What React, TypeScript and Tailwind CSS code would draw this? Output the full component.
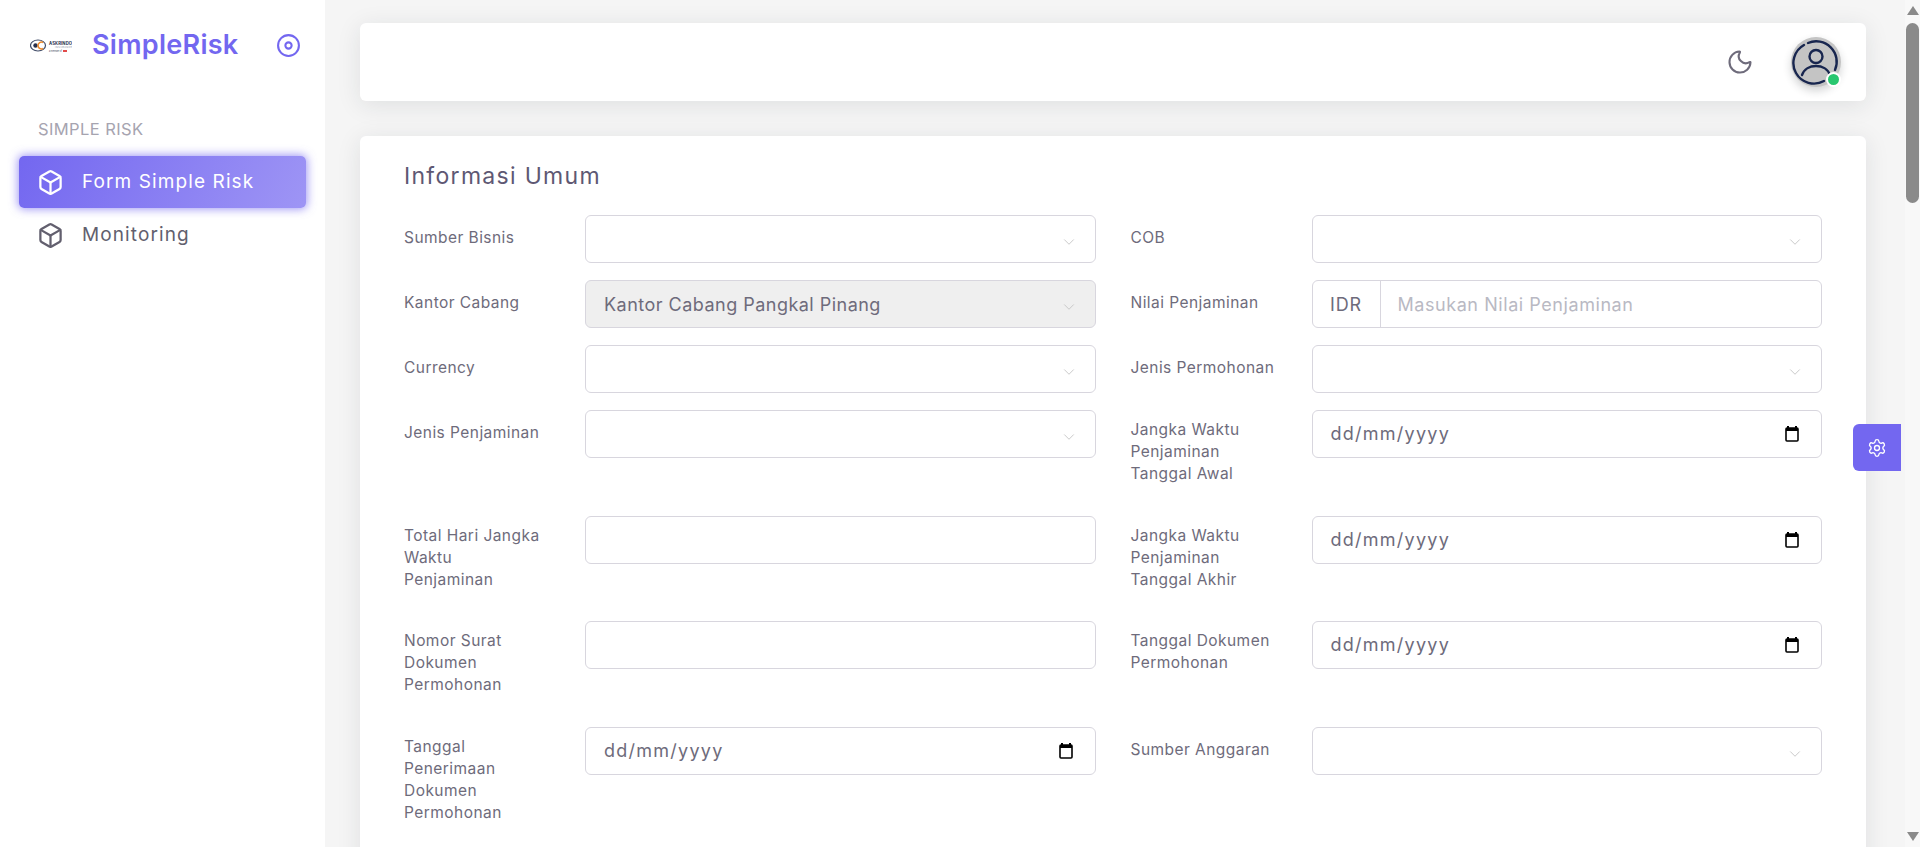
import { Box, ChevronDown, Moon, Settings } from 'lucide-react'

const font = { fontFamily: 'Inter, "Liberation Sans", sans-serif' }

type Kind = 'select' | 'disabled' | 'money' | 'date' | 'text'

const fields: { label: string; kind: Kind }[] = [
  { label: 'Sumber Bisnis', kind: 'select' },
  { label: 'COB', kind: 'select' },
  { label: 'Kantor Cabang', kind: 'disabled' },
  { label: 'Nilai Penjaminan', kind: 'money' },
  { label: 'Currency', kind: 'select' },
  { label: 'Jenis Permohonan', kind: 'select' },
  { label: 'Jenis Penjaminan', kind: 'select' },
  { label: 'Jangka Waktu Penjaminan Tanggal Awal', kind: 'date' },
  { label: 'Total Hari Jangka\nWaktu\nPenjaminan', kind: 'text' },
  { label: 'Jangka Waktu Penjaminan Tanggal Akhir', kind: 'date' },
  { label: 'Nomor Surat Dokumen Permohonan', kind: 'text' },
  { label: 'Tanggal Dokumen Permohonan', kind: 'date' },
  { label: 'Tanggal Penerimaan Dokumen Permohonan', kind: 'date' },
  { label: 'Sumber Anggaran', kind: 'select' },
]

function CalendarIcon() {
  return (
    <svg viewBox="0 0 14 16" className="h-4 w-[14px]" fill="none">
      <path d="M3 0v2M11 0v2" stroke="#000" strokeWidth="2" />
      <rect x="1" y="2" width="12" height="13" rx="1" stroke="#000" strokeWidth="1.6" />
      <rect x="1" y="2" width="12" height="3" fill="#000" />
    </svg>
  )
}

function Control({ kind }: { kind: Kind }) {
  const base = 'h-[48px] w-full rounded-[6px] border border-[#d8d6de] text-[18px] text-[#6e6b7b]'

  if (kind === 'money') {
    return (
      <div className={`flex items-center ${base}`}>
        <span className="flex h-full w-[68px] shrink-0 items-center justify-center border-r border-[#d8d6de] tracking-[0.8px]">IDR</span>
        <input
          placeholder="Masukan Nilai Penjaminan"
          className="h-full min-w-0 flex-1 bg-transparent px-[17px] tracking-[0.56px] outline-none placeholder:text-[#b9b9c3]"
        />
      </div>
    )
  }
  if (kind === 'date') {
    return (
      <div className={`flex items-center justify-between pl-[18px] pr-[22px] ${base}`}>
        <span className="pb-[1px] tracking-[1.25px]">dd/mm/yyyy</span>
        <CalendarIcon />
      </div>
    )
  }
  if (kind === 'text') {
    return <input className={`block outline-none ${base}`} />
  }
  return (
    <div className="relative">
      <div className={`flex items-center px-[18px] tracking-[0.48px] ${base} ${kind === 'disabled' ? 'bg-[#efefef]' : ''}`}>
        {kind === 'disabled' ? 'Kantor Cabang Pangkal Pinang' : ''}
      </div>
      <ChevronDown className="absolute right-[18px] top-[18px] h-[18px] w-[18px] text-[#c4c4c4]" strokeWidth={1.2} />
    </div>
  )
}

export default function App() {
  return (
    <div className="flex h-screen overflow-hidden bg-[#f5f5f5]" style={font}>
      {/* Sidebar */}
      <aside className="flex w-[325px] shrink-0 flex-col bg-white">
        <div className="flex h-[90px] items-center pl-[30px] pr-[24px]">
          <svg viewBox="0 0 42 16" className="h-4 w-[42px]">
            <ellipse cx="8" cy="8.500" rx="7.500" ry="5.500" fill="none" stroke="#3f4a66" strokeWidth="1.2" />
            <circle cx="5.500" cy="8.500" r="2.200" fill="#27304d" />
            <path d="M13 5.500a3.400 3.400 0 1 0 0 6" fill="none" stroke="#ee8a2c" strokeWidth="1.600" />
            <text x="19" y="8" fontSize="4.200" fontWeight="700" fill="#27304d" textLength="23">ASKRINDO</text>
            <text x="25" y="11" fontSize="2.400" fill="#8a8fa3" textLength="17">INSURANCE</text>
            <text x="19" y="15" fontSize="2.400" fill="#5c6275" textLength="13">a member of</text>
            <rect x="33" y="13" width="4" height="2" fill="#e24a4a" />
          </svg>
          <h1 className="ml-5 flex-1 text-[27px] font-semibold tracking-[0.28px] text-[#7367f0]">SimpleRisk</h1>
          <svg viewBox="0 0 24 24" className="h-[25px] w-[25px]" fill="none" stroke="#7367f0" strokeWidth="2">
            <circle cx="12" cy="12" r="10" />
            <circle cx="12" cy="12" r="3" />
          </svg>
        </div>
        <div className="mt-[28px] pl-[38px] text-[16.5px] leading-[22px] tracking-[0.4px] text-[#a6a4b0]">SIMPLE RISK</div>
        <nav className="mt-[16px] flex flex-col gap-[1px] px-[19px]">
          <a className="flex h-[52px] items-center gap-[18px] rounded-[5px] bg-[linear-gradient(118deg,#7367f0,#9e95f5)] pl-[18px] text-[19px] tracking-[1.1px] text-white shadow-[0_0_10px_1px_rgba(115,103,240,0.7)]">
            <Box className="h-[27px] w-[27px]" strokeWidth={2} />
            Form Simple Risk
          </a>
          <a className="flex h-[52px] items-center gap-[18px] pl-[18px] text-[19px] tracking-[1.1px] text-[#625f6e]">
            <Box className="h-[27px] w-[27px]" strokeWidth={2} />
            Monitoring
          </a>
        </nav>
      </aside>

      {/* Main */}
      <main className="flex min-w-0 flex-1 flex-col gap-[35px] pl-[35px] pr-[39px] pt-[23px]">
        <header className="flex h-[78px] shrink-0 items-center justify-end rounded-[6px] bg-white pr-[25px] shadow-[0_4px_24px_0_rgba(34,41,47,0.1)]">
          <Moon className="mr-[37px] h-[28px] w-[28px] text-[#6e6b7b]" strokeWidth={1.8} />
          <div className="relative h-[50px] w-[50px]">
            <div className="h-full w-full rounded-full bg-[#c4c4c4] shadow-[0_4px_8px_rgba(34,41,47,0.2)]">
              <svg viewBox="0 0 50 50" className="h-full w-full" fill="none" stroke="#18264f" strokeWidth="2.400" strokeLinecap="round">
                <path d="M13 8A20.500 20.500 0 1 0 33 44" />
                <path d="M17 6A20.500 20.500 0 0 1 44 33" />
                <circle cx="25" cy="19.500" r="6.500" />
                <path d="M11 38c2-6 8-9 14-9s12 3 14 9" />
              </svg>
            </div>
            <span className="absolute bottom-0 right-0 h-[15px] w-[15px] rounded-full border-2 border-white bg-[#28c76f]" />
          </div>
        </header>

        <section className="flex-1 rounded-[6px] bg-white px-[44px] pb-10 pt-[25px] shadow-[0_4px_24px_0_rgba(34,41,47,0.1)]">
          <h2 className="text-[23px] leading-[30px] tracking-[1.3px] text-[#5e5873]">Informasi Umum</h2>
          <div className="mt-[24px] grid grid-cols-2 gap-x-[35px] gap-y-[17px]">
            {fields.map((f) => (
              <div key={f.label} className="flex items-start">
                <label
                  className={`w-[181px] shrink-0 whitespace-pre-line pr-[31px] text-[15.5px] leading-[22px] tracking-[0.45px] text-[#6e6b7b] ${
                    f.label.length > 16 ? 'pb-[13.5px] pt-[9px]' : 'pt-[12px]'
                  }`}
                >
                  {f.label}
                </label>
                <div className="min-w-0 flex-1">
                  <Control kind={f.kind} />
                </div>
              </div>
            ))}
          </div>
        </section>
      </main>

      {/* Scrollbar */}
      <div className="flex w-[15px] shrink-0 flex-col items-center bg-[#f8f8f8]">
        <div className="mt-[6px] h-0 w-0 border-x-[6px] border-b-[9px] border-x-transparent border-b-[#8a8a8a]" />
        <div className="mt-[8px] h-[180px] w-[13px] rounded-full bg-[#8a8a8a]" />
        <div className="flex-1" />
        <div className="mb-[6px] h-0 w-0 border-x-[6px] border-t-[9px] border-x-transparent border-t-[#8a8a8a]" />
      </div>

      {/* Customizer tab */}
      <button className="absolute right-[19px] top-[424px] flex h-[47px] w-[48px] items-center justify-center rounded-l-[6px] bg-[#7367f0] text-white">
        <Settings className="h-[20px] w-[20px]" strokeWidth={1.6} />
      </button>
    </div>
  )
}
